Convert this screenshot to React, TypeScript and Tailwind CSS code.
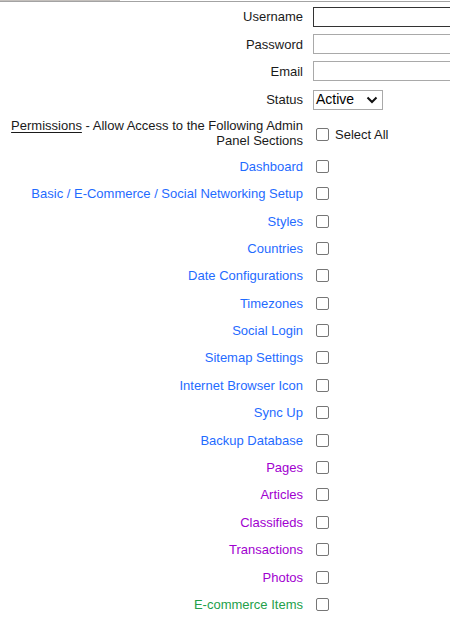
const blue = "text-[#1f6bff]";
const purple = "text-[#a100d0]";
const green = "text-[#23a04a]";

const sections: { name: string; color: string }[] = [
  { name: "Dashboard", color: blue },
  { name: "Basic / E-Commerce / Social Networking Setup", color: blue },
  { name: "Styles", color: blue },
  { name: "Countries", color: blue },
  { name: "Date Configurations", color: blue },
  { name: "Timezones", color: blue },
  { name: "Social Login", color: blue },
  { name: "Sitemap Settings", color: blue },
  { name: "Internet Browser Icon", color: blue },
  { name: "Sync Up", color: blue },
  { name: "Backup Database", color: blue },
  { name: "Pages", color: purple },
  { name: "Articles", color: purple },
  { name: "Classifieds", color: purple },
  { name: "Transactions", color: purple },
  { name: "Photos", color: purple },
  { name: "E-commerce Items", color: green },
];

function Box() {
  return <span className="ml-[3px] block h-[13px] w-[13px] shrink-0 rounded-[2px] border border-[#767676] bg-white" />;
}

function Row({ label, children, labelClass = "" }: { label: React.ReactNode; children: React.ReactNode; labelClass?: string }) {
  return (
    <div className="flex h-[27.4px] items-center">
      <div className={`w-[303px] shrink-0 text-right ${labelClass}`}>{label}</div>
      <div className="ml-[10px] flex flex-1 items-center">{children}</div>
    </div>
  );
}

export default function App() {
  return (
    <div className="min-h-[626px] w-[450px] overflow-hidden bg-white text-[13px] leading-[15px] text-[#1a1a1a]" style={{ fontFamily: '"Liberation Sans", Arial, sans-serif' }}>
      <div className="flex h-[1px]">
        <div className="w-[120px] bg-[#c4c0bc]" />
      </div>
      <div className="h-[1px] bg-[#a3a3a3]" />
      <div className="pt-[1px]">
        <Row label="Username">
          <div className="h-[20px] w-[160px] shrink-0 border border-[#333]" />
        </Row>
        <Row label="Password">
          <div className="h-[20px] w-[160px] shrink-0 border border-[#a9a9a9]" />
        </Row>
        <Row label="Email">
          <div className="h-[20px] w-[160px] shrink-0 border border-[#a9a9a9]" />
        </Row>
        <div className="pt-[1px]">
          <Row label="Status">
            <div className="flex h-[20px] w-[70px] items-center justify-between border border-[#a9a9a9] pl-[2px] pr-[4px] text-[14px] text-black">
              <span>Active</span>
              <svg width="12" height="8" viewBox="0 0 12 8">
                <path d="M1.5 1.5 L6 6 L10.5 1.5" fill="none" stroke="#111" strokeWidth="2" />
              </svg>
            </div>
          </Row>
        </div>
        <div className="-mt-[1px] flex h-[40px] items-center">
          <div className="w-[303px] shrink-0 pl-[10px] pt-[1px] text-right">
            <span className="underline underline-offset-2">Permissions</span> - Allow Access to the Following Admin Panel Sections
          </div>
          <div className="ml-[10px] mt-[3px] flex items-center gap-[6px]">
            <Box />
            <span>Select All</span>
          </div>
        </div>
        {sections.map((s) => (
          <Row key={s.name} label={s.name} labelClass={s.color}>
            <Box />
          </Row>
        ))}
      </div>
    </div>
  );
}
